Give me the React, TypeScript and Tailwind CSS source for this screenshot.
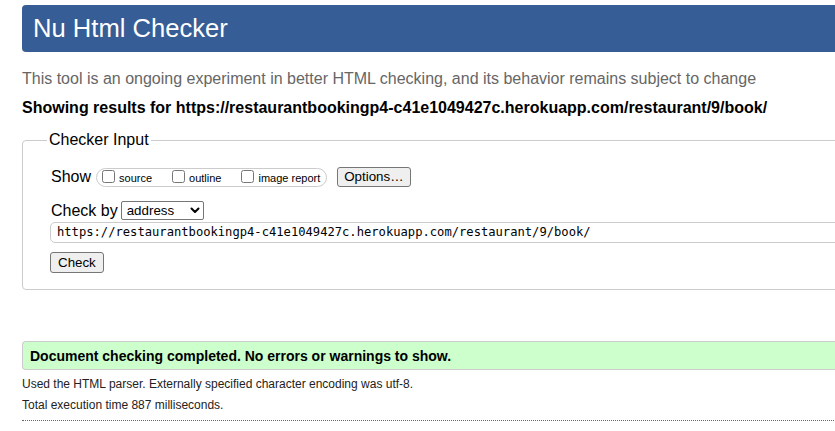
import React from 'react'

const URL_TEXT = 'https://restaurantbookingp4-c41e1049427c.herokuapp.com/restaurant/9/book/'

function Check({ label }: { label: string }) {
  return (
    <label className="flex items-start">
      <input type="checkbox" className="w-[13px] h-[13px] m-0 mt-[1px]" />
      <span className="ml-[4px] text-[11px] leading-[13px] pt-[3px] text-black">{label}</span>
    </label>
  )
}

export default function App() {
  return (
    <div className="w-screen h-screen overflow-hidden bg-white font-['Liberation_Sans',Arial,sans-serif] text-black">
      <div className="ml-[22px] w-[900px] flex flex-col">
        {/* Banner */}
        <div className="mt-[5px] h-[47px] flex items-center px-[11px] rounded-[4px] bg-[#365d95]">
          <h1 className="text-[25.6px] leading-none text-white">Nu Html Checker</h1>
        </div>

        <p className="mt-[17px] text-[16px] leading-5 text-[#666]">
          This tool is an ongoing experiment in better HTML checking, and its behavior remains subject to change
        </p>
        <p className="mt-[9px] text-[16px] leading-5 font-bold">
          Showing results for {URL_TEXT}
        </p>

        {/* Checker input */}
        <fieldset className="mt-[13px] border border-[#ccc] rounded-[4px] pl-[28px] pt-[18px] pb-[16px]">
          <legend className="-ml-[4px] px-[2px] text-[16px] leading-[18px]">Checker Input</legend>

          <div className="flex items-center h-[20px]">
            <span className="text-[16px] leading-5">Show</span>
            <div className="ml-[5px] h-[19px] flex items-start gap-[20px] border border-[#ccc] rounded-full pl-[5px] pr-[6px]">
              <Check label="source" />
              <Check label="outline" />
              <Check label="image report" />
            </div>
            <button className="ml-[10px] h-[20px] px-[6px] border border-[#767676] rounded-[3px] bg-[#efefef] text-[13.33px] leading-none">
              Options…
            </button>
          </div>

          <div className="mt-[14px] flex items-center h-[19px]">
            <span className="text-[16px] leading-5">Check by</span>
            <div className="ml-[3px] w-[83px] h-[19px] flex items-center justify-between pl-[5px] pr-[3px] border border-[#767676] rounded-[2px] bg-white">
              <span className="text-[13.33px] leading-none">address</span>
              <svg width="10" height="7" viewBox="0 0 10 7" fill="none" stroke="#000" strokeWidth="2" strokeLinecap="round" strokeLinejoin="round">
                <path d="M1.5 1.5l3.5 3.5 3.5-3.5" />
              </svg>
            </div>
          </div>

          <div className="-ml-[1px] mt-[2px] h-[21px] flex items-center px-[6px] border border-[#ccc] rounded-[5px]">
            <span className="font-['DejaVu_Sans_Mono',monospace] text-[12.15px] leading-none">{URL_TEXT}</span>
          </div>

          <div className="-ml-[1px] mt-[9px] flex">
            <button className="h-[21px] px-[7px] border border-[#767676] rounded-[3px] bg-[#efefef] text-[13.33px] leading-none">
              Check
            </button>
          </div>
        </fieldset>

        {/* Result */}
        <div className="mt-[51px] h-[29px] flex items-center pl-[7px] border border-r-0 border-[#ccc] rounded-l-[4px] bg-[#ccffcc]">
          <p className="text-[14px] leading-none font-bold">Document checking completed. No errors or warnings to show.</p>
        </div>
        <p className="mt-[4px] text-[12px] leading-[21px] text-[#222]">
          Used the HTML parser. Externally specified character encoding was utf-8.
        </p>
        <p className="text-[12px] leading-[21px] text-[#222]">Total execution time 887 milliseconds.</p>
        <div className="mt-[4px] border-t border-dotted border-[#666]" />
      </div>
    </div>
  )
}
